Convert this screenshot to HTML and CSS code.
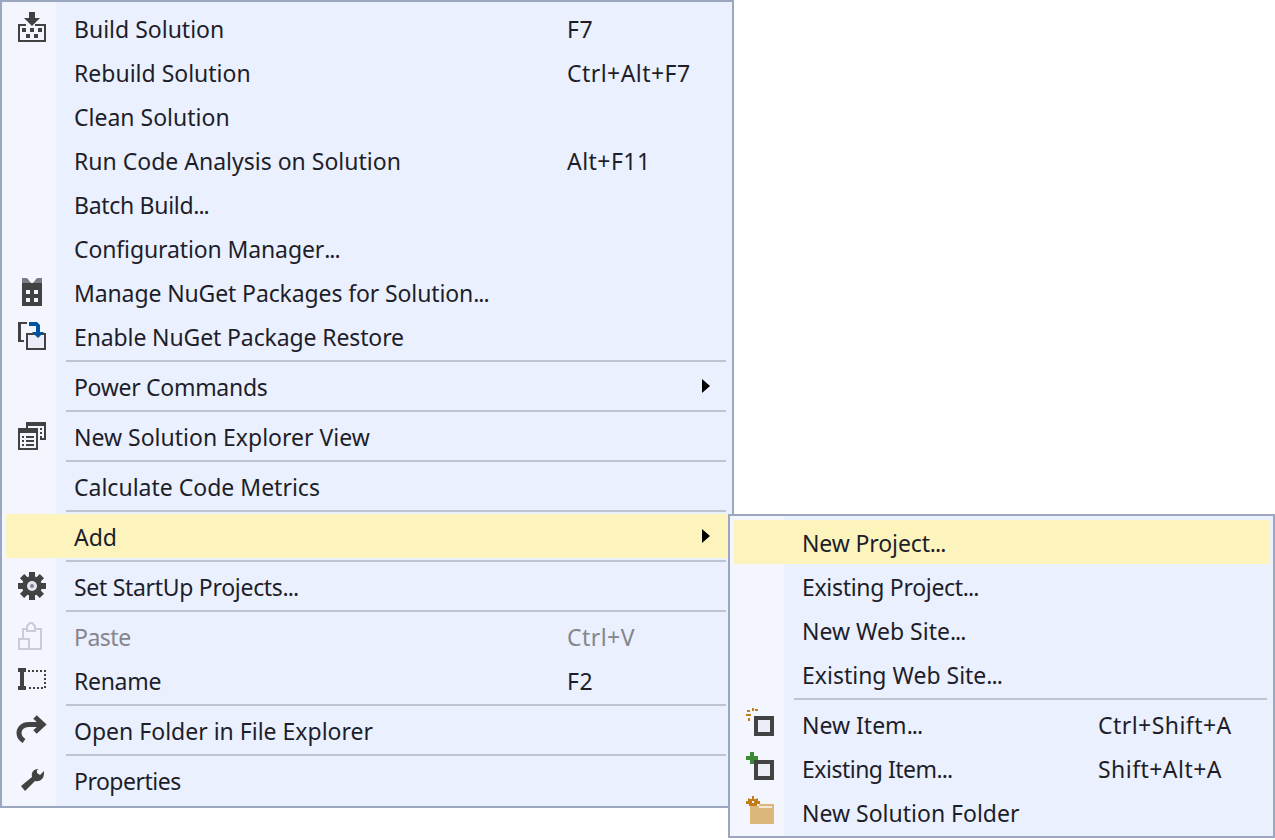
FILE: index.html
```html
<!DOCTYPE html>
<html lang="en">
<head>
  <meta charset="UTF-8" />
  <title>Solution context menu</title>
  <link rel="stylesheet" href="styles.css">
</head>
<body>
  <div class="menu">
    <div class="item">
      <span class="icon">
        <svg viewBox="0 0 32 32"><path d="M2 12h8v2H4v14h24V14h-9v-2h11v18H2z"/><path d="M13 0h6v6h5l-8 8-8-8h5z"/><path d="M6 16h4v4H6zM14 16h4v4h-4zM22 16h4v4h-4zM10 22h4v4h-4zM18 22h4v4h-4z"/></svg>
      </span>
      <span class="label">Build Solution</span><span class="shortcut">F7</span>
    </div>
    <div class="item"><span class="icon"></span><span class="label">Rebuild Solution</span><span class="shortcut">Ctrl+Alt+F7</span></div>
    <div class="item"><span class="icon"></span><span class="label">Clean Solution</span></div>
    <div class="item"><span class="icon"></span><span class="label">Run Code Analysis on Solution</span><span class="shortcut">Alt+F11</span></div>
    <div class="item"><span class="icon"></span><span class="label tight">Batch Build<span class="dots">...</span></span></div>
    <div class="item"><span class="icon"></span><span class="label tight-1">Configuration Manager<span class="dots">...</span></span></div>
    <div class="item">
      <span class="icon">
        <svg viewBox="0 0 32 32"><path d="M6 7h20v23H6zM10 14v4h4v-4zM18 14v4h4v-4zM10 22v4h4v-4zM18 22v4h4v-4z" fill-rule="evenodd"/><path fill="#7a7a82" d="M6 2h5l4 5H6zM26 2h-5l-4 5h9z"/></svg>
      </span>
      <span class="label tight-1">Manage NuGet Packages for Solution<span class="dots">...</span></span>
    </div>
    <div class="item">
      <span class="icon">
        <svg viewBox="0 0 32 32"><path d="M2 2h9v2H5v16h3v2H2z"/><rect x="11" y="14" width="18" height="15" fill="#ebedf8" stroke="#424242" stroke-width="2"/><path fill="#00539c" d="M13 2h8l3 3v7h4l-6 6-6-6h4V6h-7z"/></svg>
      </span>
      <span class="label tight-1">Enable NuGet Package Restore</span>
    </div>
    <div class="sep"></div>
    <div class="item"><span class="icon"></span><span class="label tight">Power Commands</span><span class="arrow"></span></div>
    <div class="sep"></div>
    <div class="item">
      <span class="icon">
        <svg viewBox="0 0 32 32"><path d="M10 2h20v18h-6v-2h4V6H12v2h-2z"/><path d="M24 8h2v2h-2zM24 12h2v2h-2zM24 16h2v2h-2z"/><path fill-rule="evenodd" d="M2 8h20v22H2zM4 13v15h16V13z"/><path d="M6 16h2v2H6zM10 16h8v2h-8zM6 20h2v2H6zM10 20h8v2h-8zM6 24h2v2H6zM10 24h8v2h-8z"/></svg>
      </span>
      <span class="label">New Solution Explorer View</span>
    </div>
    <div class="sep"></div>
    <div class="item"><span class="icon"></span><span class="label">Calculate Code Metrics</span></div>
    <div class="sep"></div>
    <div class="item active"><span class="icon"></span><span class="label">Add</span><span class="arrow"></span></div>
    <div class="sep"></div>
    <div class="item">
      <span class="icon">
        <svg viewBox="0 0 32 32"><g><rect x="13" y="2" width="6" height="28"/><rect x="13" y="2" width="6" height="28" transform="rotate(45 16 16)"/><rect x="13" y="2" width="6" height="28" transform="rotate(90 16 16)"/><rect x="13" y="2" width="6" height="28" transform="rotate(135 16 16)"/></g><circle cx="16" cy="16" r="10"/><circle cx="16" cy="16" r="5" fill="#e4e6f2"/><circle cx="16" cy="16" r="2" fill="#85858c"/></svg>
      </span>
      <span class="label tight">Set StartUp Projects<span class="dots">...</span></span>
    </div>
    <div class="sep"></div>
    <div class="item disabled">
      <span class="icon">
        <svg class="outline" viewBox="0 0 32 32" stroke="#c9ccd6" stroke-width="2"><path d="M7 18V9h4M19 9h6v20H13"/><path d="M11 11V6l3-3h2l3 3v5z"/><rect x="3" y="19" width="10" height="10"/></svg>
      </span>
      <span class="label tighter">Paste</span><span class="shortcut">Ctrl+V</span>
    </div>
    <div class="item">
      <span class="icon">
        <svg viewBox="0 0 32 32"><path d="M2 4h8v4H8v14h2v4H2v-4h2V8H2z"/><path fill="none" stroke="#424242" stroke-width="2" stroke-dasharray="2 2" d="M12 7h17v17H12"/></svg>
      </span>
      <span class="label tight">Rename</span><span class="shortcut">F2</span>
    </div>
    <div class="sep"></div>
    <div class="item">
      <span class="icon">
        <svg class="outline" viewBox="0 0 32 32" stroke="#424242" stroke-width="5"><path d="M19 3l8 7.500-8 7.500"/><path d="M26 10.500H13C6 10.500 3 15 3 19c0 3 2 6 5 8"/></svg>
      </span>
      <span class="label">Open Folder in File Explorer</span>
    </div>
    <div class="sep"></div>
    <div class="item">
      <span class="icon">
        <svg viewBox="0 0 32 32"><path d="M22 5c-4 0-7 3-6 8L5 22l4 5 10-10c5 1 9-2 9-8V7l-4 4-3-2v-3l2-1z"/></svg>
      </span>
      <span class="label tighter">Properties</span>
    </div>
  </div>

  <div class="menu submenu">
    <div class="item active"><span class="icon"></span><span class="label tight-1">New Project<span class="dots">...</span></span></div>
    <div class="item"><span class="icon"></span><span class="label tight">Existing Project<span class="dots">...</span></span></div>
    <div class="item"><span class="icon"></span><span class="label">New Web Site<span class="dots">...</span></span></div>
    <div class="item"><span class="icon"></span><span class="label">Existing Web Site<span class="dots">...</span></span></div>
    <div class="sep"></div>
    <div class="item">
      <span class="icon">
        <svg viewBox="0 0 32 32"><rect x="12" y="10" width="16" height="16" fill="#ebedf8" stroke="#424242" stroke-width="4"/><path fill="#c27d1a" d="M8 0h2v3H8zM11 1h3v2h-3zM3 2h3v2H3zM2 6h5v2H2zM4 10h2v3H4z"/></svg>
      </span>
      <span class="label">New Item<span class="dots">...</span></span><span class="shortcut">Ctrl+Shift+A</span>
    </div>
    <div class="item">
      <span class="icon">
        <svg viewBox="0 0 32 32"><rect x="12" y="10" width="16" height="16" fill="#ebedf8" stroke="#424242" stroke-width="4"/><path fill="#388a34" d="M6 0h4v4h4v4h-4v4H6V8H2V4h4z"/></svg>
      </span>
      <span class="label tighter">Existing Item<span class="dots">...</span></span><span class="shortcut">Shift+Alt+A</span>
    </div>
    <div class="item">
      <span class="icon">
        <svg viewBox="0 0 32 32"><path fill="#dcb67a" d="M6 10h8l2-2h14v20H6z"/><path fill="#f0ead9" d="M15 10h13v2H15z"/><path fill="#c27d1a" d="M8 0h2v3h2l2-1v3h2v3h-3v2H5V8H2V5h2V2l2 1h2z"/><path fill="#f3f6fe" d="M8 5h2v2H8z"/></svg>
      </span>
      <span class="label">New Solution Folder</span>
    </div>
  </div>
</body>
</html>
```

FILE: styles.css
```css
html, body {
  margin: 0;
  background: white;
}

body {
  width: 1275px;
  height: 840px;
  overflow: hidden;
  position: relative;
  font-family: 'Noto Sans', sans-serif;
  font-size: 23px;
  color: #1e1e2a;
}

.menu {
  box-sizing: border-box;
  width: 734px;
  padding: 4px;
  border: 2px solid #9ba7bf;
  background: linear-gradient(90deg, #f3f6fe 54px, #eaf0fe 54px);
}

/* sits over the parent menu, next to Add */
.submenu {
  position: absolute;
  left: 728px;
  top: 514px;
  width: 547px;
  padding-bottom: 2px;
}

.item {
  display: flex;
  align-items: center;
  height: 44px;
}

.item.active {
  background: #fdf3bd;
}

.item.disabled {
  color: #85858c;
}

.icon {
  flex: none;
  width: 40px;
  height: 32px;
  padding-left: 10px;
}

.icon svg {
  display: block;
  width: 32px;
  height: 32px;
  fill: #424242;
}

.icon svg.outline {
  fill: none;
}

.label {
  flex: none;
  box-sizing: border-box;
  width: 511px;
  padding: 2px 0 0 18px;
  white-space: nowrap;
}

.submenu .label {
  width: 314px;
}

/* Noto runs a bit wider than the menu font on some strings */
.tight-1 {
  letter-spacing: -0.12px;
}

.tight {
  letter-spacing: -0.3px;
}

.tighter {
  letter-spacing: -0.5px;
}

.dots {
  letter-spacing: -1px;
}

.shortcut {
  padding-top: 2px;
  letter-spacing: 0.45px;
  white-space: nowrap;
}

.arrow {
  margin-left: auto;
  margin-right: 18px;
  border-left: 8px solid black;
  border-top: 7px solid transparent;
  border-bottom: 7px solid transparent;
}

.sep {
  height: 2px;
  margin: 2px 2px 2px 60px;
  background: #bec3d0;
}
```
